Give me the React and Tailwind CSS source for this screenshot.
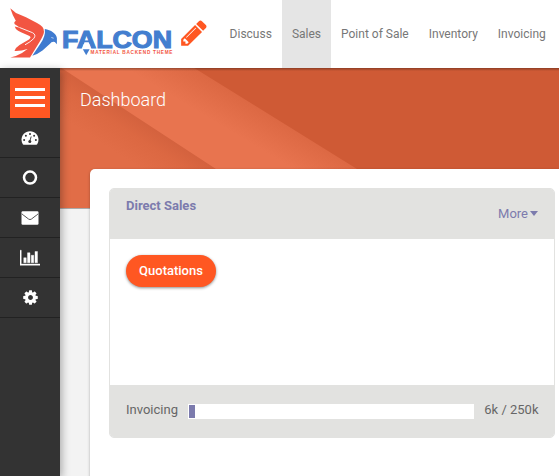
import React from "react";

const navItems = ["Discuss", "Sales", "Point of Sale", "Inventory", "Invoicing"];

function Logo() {
  return (
    <svg width="180" height="68" viewBox="0 0 180 68" className="block shrink-0">
      <path
        fill="#f25542"
        d="M10.3 8.3 L16 13 L26 17.2 L37 23 Q44.5 26.5 44 32 Q43.5 35.5 39.5 42 L30 57.5 H10.3 Q17 56 22 53 L27.5 49 Q21 51.3 14.5 51 Q15.5 47.5 19.5 45 L29 39.5 Q32 37.2 29 35.8 L21 32.3 Q15.5 30 14.8 26.5 L20 27.8 L14.5 24 Q13.5 22 15.8 20.8 Q12.5 15.5 10.3 8.3Z"
      />
      <path d="M19.5 27.5 L32.5 32.7 Q36.5 34.8 33.8 38.5 Q30.5 42 25 44.8" fill="none" stroke="white" strokeWidth="0.9" />
      <path fill="#3f7bd0" d="M44.8 29 C51 30 56.2 33.5 56.9 38 V44.2 L54.8 42 Q51.5 41.3 50 43.8 L42.5 50.5 Q38 54 32.3 55.8 L40.5 43.5 Q45.8 36 44.8 29Z" />
      <path d="M51.3 37.5 L53.6 38.2" stroke="#fff" strokeOpacity=".7" strokeWidth="0.9" />
      <g transform="translate(0 48)">
        <text x="62" y="0" textLength="110" lengthAdjust="spacingAndGlyphs" fill="#437ecf" stroke="#437ecf" strokeWidth="1.1" fontSize="24" fontWeight="700" fontFamily="Liberation Sans, sans-serif">FALCON</text>
      </g>
      <path d="M84.5 42.3 H88.7 L91.2 49 H82Z" fill="white" />
      <path d="M82.8 49.3 H89.6 L86.2 55.3Z" fill="#437ecf" />
      <text x="90.5" y="54.3" textLength="82" lengthAdjust="spacing" fill="#f25542" fontSize="4.7" fontWeight="700" fontFamily="Liberation Sans, sans-serif">MATERIAL BACKEND THEME</text>
    </svg>
  );
}

function Pencil() {
  return (
    <svg width="30" height="30" viewBox="0 0 1792 1792" fill="#ff5722" className="block shrink-0">
      <path d="M491 1536l91-91-235-235-91 91v107h128v128h107zm523-928q0-22-22-22-10 0-17 7l-542 542q-7 7-7 17 0 22 22 22 10 0 17-7l542-542q7-7 7-17zm-54-192l416 416-832 832h-416v-416zm683 96q0 53-37 90l-166 166-416-416 166-165q36-38 90-38 53 0 91 38l235 234q37 39 37 91z" />
    </svg>
  );
}

function Gauge() {
  return (
    <svg width="18" height="16" viewBox="0 0 18 16" className="block">
      <path d="M9 1.2 C4 1.2 .5 5 .5 9.8 Q.5 12.3 1.8 14.3 Q2.1 14.7 2.6 14.7 H15.4 Q15.9 14.7 16.2 14.3 Q17.5 12.3 17.5 9.8 C17.5 5 14 1.2 9 1.2Z" fill="white" />
      <g fill="#333">
        <circle cx="3.1" cy="10" r="1" />
        <circle cx="4.9" cy="5.8" r="1" />
        <circle cx="9" cy="3.9" r="1" />
        <circle cx="13.1" cy="5.8" r="1" />
        <circle cx="14.9" cy="10" r="1" />
        <circle cx="8.8" cy="11.6" r="1.5" />
      </g>
      <path d="M8.8 11.2 L10.2 6.5" stroke="#333" strokeWidth="0.9" />
    </svg>
  );
}

function Ring() {
  return (
    <svg width="16" height="16" viewBox="0 0 16 16" className="block">
      <circle cx="8" cy="7.6" r="6" fill="none" stroke="white" strokeWidth="2.5" />
    </svg>
  );
}

function Envelope() {
  return (
    <svg width="18" height="16" viewBox="0 0 18 16" className="block">
      <rect x=".5" y="1.2" width="17" height="13.6" rx="1.2" fill="white" />
      <path d="M.8 3.7 Q2 5 4 6.3 L7.5 9 Q9 10.2 10.5 9 L14 6.3 Q16 5 17.2 3.7" fill="none" stroke="#444" strokeWidth="0.9" />
    </svg>
  );
}

function Bars() {
  return (
    <svg width="20" height="17.5" viewBox="0 0 2048 1792" fill="white" stroke="white" strokeWidth="40" className="block">
      <path d="M640 896v512h-256v-512h256zm384-512v1024h-256v-1024h256zm1024 1152v128h-2048v-1536h128v1408h1920zm-640-896v768h-256v-768h256zm384-384v1152h-256v-1152h256z" />
    </svg>
  );
}

function Cog() {
  return (
    <svg width="17" height="17" viewBox="0 0 1792 1792" fill="white" className="block">
      <path d="M1152 896q0-106-75-181t-181-75-181 75-75 181 75 181 181 75 181-75 75-181zm512-109v222q0 12-8 23t-20 13l-185 28q-19 54-39 91 35 50 107 138 10 12 10 25t-9 23q-27 37-99 108t-94 71q-12 0-26-9l-138-108q-44 23-91 38-16 136-29 186-7 28-36 28h-222q-14 0-24.5-8.5t-11.5-21.5l-28-184q-49-16-90-37l-141 107q-10 9-25 9-14 0-25-11-126-114-165-168-7-10-7-23 0-12 8-23 15-21 51-66.5t54-70.5q-27-50-41-99l-183-27q-13-2-21-12.5t-8-23.5v-222q0-12 8-23t19-13l186-28q14-46 39-92-40-57-107-138-10-12-10-24 0-10 9-23 26-36 98.5-107.5t94.5-71.5q13 0 26 10l138 107q44-23 91-38 16-136 29-186 7-28 36-28h222q14 0 24.5 8.5t11.5 21.5l28 184q49 16 90 37l142-107q9-9 24-9 13 0 25 10 129 119 165 170 7 8 7 22 0 12-8 23-15 21-51 66.5t-54 70.5q26 50 41 98l183 28q13 2 21 12.5t8 23.5z" />
    </svg>
  );
}

function BannerArt() {
  return (
    <svg className="absolute inset-x-0 top-0" width="499" height="141" viewBox="0 0 499 141">
      <defs>
        <linearGradient id="low" gradientUnits="userSpaceOnUse" x1="80" y1="52" x2="58" y2="86">
          <stop offset="0" stopColor="#d4623e" />
          <stop offset=".4" stopColor="#dc6842" />
          <stop offset="1" stopColor="#e16d47" />
        </linearGradient>
        <linearGradient id="mid" gradientUnits="userSpaceOnUse" x1="218" y1="51" x2="200" y2="81">
          <stop offset="0" stopColor="#dc6843" />
          <stop offset="1" stopColor="#e8744f" />
        </linearGradient>
        <linearGradient id="edge" x1="0" y1="0" x2="0" y2="1">
          <stop offset="0" stopColor="#000" stopOpacity=".32" />
          <stop offset="1" stopColor="#000" stopOpacity="0" />
        </linearGradient>
      </defs>
      <rect width="499" height="141" fill="#cf5a35" />
      <path d="M-2 -2 H131 L297 101 L362 141 H-2Z" fill="url(#mid)" />
      <path d="M0 -1 L156 101 L218 141 H0Z" fill="url(#low)" />
      <rect width="499" height="3" fill="url(#edge)" />
      <rect y="140" width="30" height="1" fill="#aaa" />
    </svg>
  );
}

const sideIcons = [Gauge, Ring, Envelope, Bars, Cog];

export default function App() {
  return (
    <div className="flex h-[476px] w-[559px] flex-col overflow-hidden bg-[#f3f3f3] font-[Roboto,sans-serif] text-[13px] text-[#666]">
      <header className="flex h-[68px] shrink-0 bg-white">
        <Logo />
        <div className="-ml-[3px] w-[42.6px] pl-[1.5px] pt-[18px]">
          <Pencil />
        </div>
        <nav className="flex text-[12px] text-[#777]">
          {navItems.map((item) => (
            <a key={item} className={`flex h-[68px] items-center whitespace-nowrap px-[10px] ${item === "Sales" ? "bg-[#e5e5e5]" : ""}`}>
              {item}
            </a>
          ))}
        </nav>
      </header>
      <div className="flex min-h-0 flex-1">
        <aside className="z-10 flex w-[60px] shrink-0 flex-col bg-[#333] pt-[10px] shadow-[2px_2px_8px_rgba(0,0,0,0.3)]">
          <button className="mx-[10px] flex h-[40px] flex-col items-center gap-[5px] bg-[#ff5722] pt-[10px]">
            <span className="h-[3px] w-[30px] bg-white" />
            <span className="h-[3px] w-[30px] bg-white" />
            <span className="h-[3px] w-[30px] bg-white" />
          </button>
          {sideIcons.map((Icon, i) => (
            <div key={i} className="flex h-[40px] items-center justify-center border-b border-[#222]">
              <Icon />
            </div>
          ))}
        </aside>
        <main className="relative min-w-0 flex-1">
          <BannerArt />
          <div className="relative">
            <h1 className="h-[101px] pl-[20px] pt-[19px] text-[18px] font-light leading-[26px] text-white">Dashboard</h1>
            <section className="ml-[30px] h-[320px] rounded-tl-[5px] bg-white pl-[19px] pt-[19px] shadow-[0_1px_3px_rgba(0,0,0,0.3)]">
              <div className="flex h-[250px] w-[446px] flex-col overflow-hidden rounded-[5px] border border-[#e2e2e0]">
                <div className="flex h-[50px] justify-between bg-[#e2e2e0] px-[16px] text-[#7c7bad]">
                  <b className="pt-[7px] font-bold leading-[20px]">Direct Sales</b>
                  <span className="mt-[15px] flex h-[20px] items-center gap-[3px]">
                    <span className="-mr-px">More</span>
                    <span className="-mt-px border-x-4 border-t-[5px] border-x-transparent border-t-[#7c7bad]" />
                  </span>
                </div>
                <div className="flex-1 pl-[16px] pt-[16px]">
                  <button className="h-[32px] w-[90px] rounded-full bg-[#ff5722] font-medium text-white shadow-[0_1px_3px_rgba(0,0,0,0.45)]">Quotations</button>
                </div>
                <div className="flex h-[52px] items-start bg-[#e2e2e0] px-[16px] pt-[14px]">
                  <span className="w-[62px] pt-px leading-[20px]">Invoicing</span>
                  <span className="mt-[5px] h-[15px] w-[286px] bg-white p-px">
                    <span className="block h-[13px] w-[6px] bg-[#7c7bad]" />
                  </span>
                  <span className="-mr-[0.5px] ml-auto pt-px leading-[20px]">6k / 250k</span>
                </div>
              </div>
            </section>
          </div>
        </main>
      </div>
    </div>
  );
}
